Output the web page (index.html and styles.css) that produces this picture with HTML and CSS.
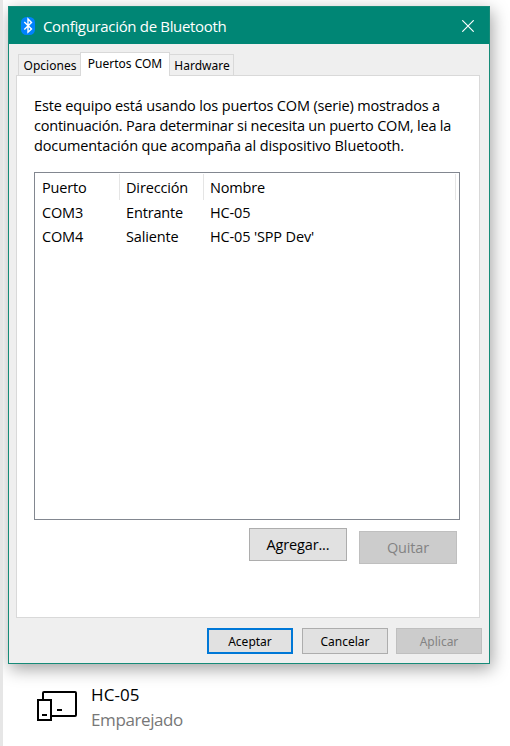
FILE: index.html
```html
<!DOCTYPE html>
<html lang="es">
<head>
<meta charset="utf-8">
<title>Configuración de Bluetooth</title>
<link rel="stylesheet" href="styles.css">
</head>
<body>
<main class="page">
  <section class="dialog">
    <header class="titlebar">
      <svg class="bt" width="14" height="20" viewBox="0 0 14 20"><rect y="1" width="14" height="18" rx="5.5" fill="#0082fc"/><path d="M3.3 6l7.2 7L7 16.2V3L10.5 6.5l-7.2 7" fill="none" stroke="#fff" stroke-width="1.4"/></svg>
      <h1 class="title"><span>Configuración de Bluetooth</span></h1>
      <svg class="close" width="12" height="12" viewBox="0 0 12 12"><path d="M.3.3l11.4 11.4M11.7.3L.3 11.7" stroke="#fff" stroke-width="1.15"/></svg>
    </header>
    <nav class="tabs">
      <div class="tab tab-options">Opciones</div>
      <div class="tab active">Puertos COM</div>
      <div class="tab tab-hardware">Hardware</div>
    </nav>
    <div class="panel">
      <p class="intro"><span class="l1">Este equipo está usando los puertos COM (serie) mostrados a</span><span class="l2">continuación. Para determinar si necesita un puerto COM, lea la</span><span class="l3">documentación que acompaña al dispositivo Bluetooth.</span></p>
      <div class="list">
        <div class="row head"><span>Puerto</span><span>Dirección</span><span>Nombre</span></div>
        <div class="row"><span>COM3</span><span>Entrante</span><span>HC-05</span></div>
        <div class="row"><span>COM4</span><span>Saliente</span><span>HC-05 'SPP Dev'</span></div>
      </div>
      <div class="actions">
        <button class="btn big">Agregar...</button>
        <button class="btn big lower" disabled>Quitar</button>
      </div>
    </div>
    <footer class="footer">
      <button class="btn default">Aceptar</button>
      <button class="btn cancel">Cancelar</button>
      <button class="btn" disabled>Aplicar</button>
    </footer>
  </section>
  <section class="device">
    <svg width="40" height="31" viewBox="0 0 40 31" fill="none" stroke="#000" stroke-width="2"><path d="M6 8V2q0-1 1-1h31q1 0 1 1v22q0 1-1 1H15"/><path d="M1 9h13v20H1zM5 24h5M20 19h5"/></svg>
    <div class="device-text">
      <div class="name">HC-05</div>
      <div class="status">Emparejado</div>
    </div>
  </section>
</main>
</body>
</html>
```
FILE: styles.css
```css
* { box-sizing: border-box; }
body { margin: 0; background: #fff; color: #000; font-family: "Open Sans", "Noto Sans", sans-serif; font-size: 14.5px; }
.page { height: 746px; overflow: hidden; border-left: 3px solid #e6e6e6; padding: 6px 0 0 5px; }
.dialog { width: 482px; height: 658px; border: 1px solid #168b78; background: #efefef; box-shadow: 2px 5px 16px rgba(0, 0, 0, .37); }
.titlebar { height: 37px; background: #008675; color: #fff; display: flex; align-items: center; padding: 0 15px 0 12px; }
.title { margin: 0 0 0 8px; font-size: 15px; font-weight: 400; flex: 1; letter-spacing: -.33px; }
.tabs { display: flex; align-items: flex-end; height: 32px; padding-left: 9px; font-family: "Noto Sans", sans-serif; font-size: 12px; }
.tab { height: 22px; width: 63px; line-height: 22px; border: 1px solid #d9d9d9; border-bottom: 0; text-align: center; white-space: nowrap; }
.tab-options { padding-left: 1px; }
.tab.active { width: 90px; height: 24px; line-height: 22px; background: #fff; margin: 0 -1px; z-index: 1; }
.tab-hardware { width: 65px; padding-left: 1px; }
.panel { margin: -1px 9px 0 7px; height: 543px; border: 1px solid #d9d9d9; background: #fff; padding: 20px 19px 0 17px; }
.intro { margin: 0; line-height: 20px; }
.intro span { display: block; white-space: nowrap; }
.l1 { letter-spacing: -.16px; }
.l2 { letter-spacing: -.22px; }
.l3 { letter-spacing: -.11px; }
.list { margin-top: 16px; height: 348px; border: 1px solid #828790; letter-spacing: -.15px; }
.row { display: grid; grid-template-columns: 85px 84px 252px; width: 421px; height: 24px; line-height: 24px; }
.row span { padding-left: 6px; }
.row span:first-child { padding-left: 7px; }
.head { height: 28px; padding-top: 1px; line-height: 28px; }
.head span { border-right: 1px solid #e5e5e5; height: 26px; }
.actions { display: flex; gap: 12px; justify-content: flex-end; padding: 8px 3px 0 0; }
.btn { width: 86px; height: 26px; padding: 0; border: 1px solid #adadad; background: #e1e1e1; color: #000; font: 12px "Noto Sans", sans-serif; }
.btn:disabled { background: #ccc; border-color: #bfbfbf; color: #838383; }
.btn.default { border: 2px solid #0078d7; }
.btn.big { width: 98px; height: 33px; font: 14.5px "Open Sans", sans-serif; letter-spacing: -.15px; }
.lower { margin-top: 3px; }
.footer { display: flex; justify-content: flex-end; padding: 10px 7px 0 0; }
.cancel { margin: 0 8px 0 9px; }
.device { display: flex; padding: 20px 0 0 29px; }
.device svg { margin-top: 7px; }
.device-text { margin-left: 14px; font-size: 17px; line-height: 25px; margin-top: -2px; }
.name { letter-spacing: .1px; }
.status { color: #777; letter-spacing: -.4px; }
```
